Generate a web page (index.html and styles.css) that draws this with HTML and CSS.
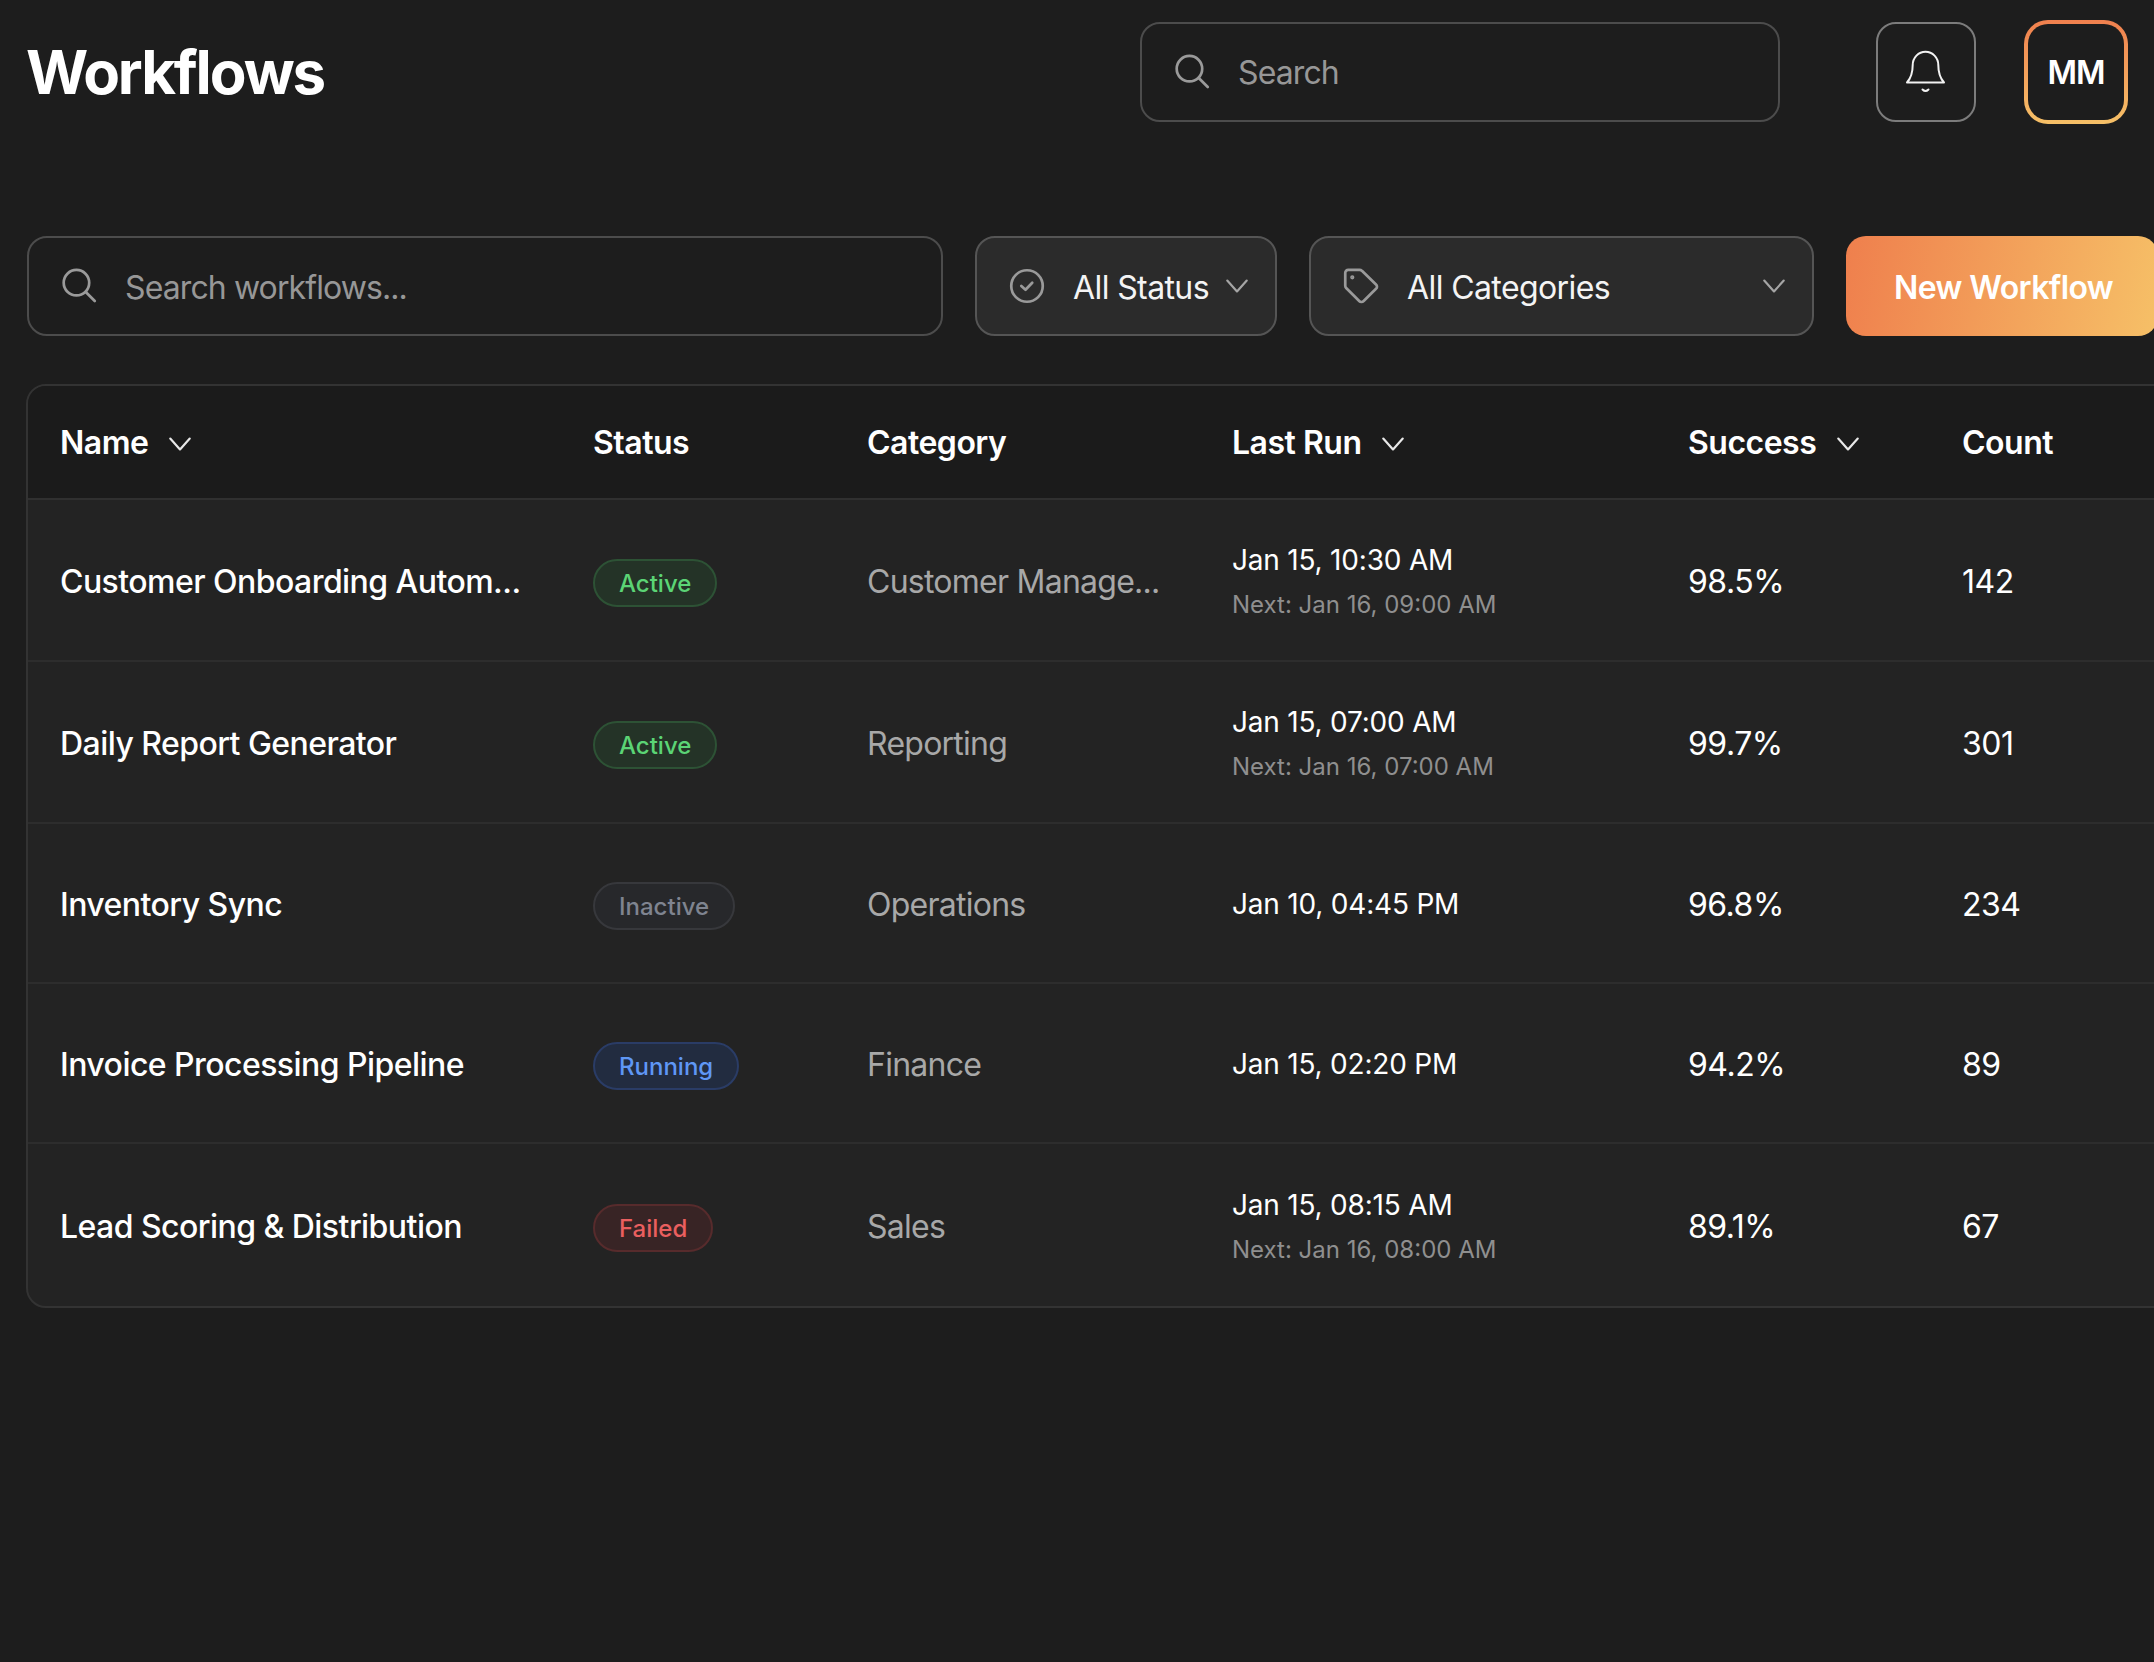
FILE: index.html
```html
<!DOCTYPE html>
<html>
	<head>
		<meta charset="UTF-8">
		<title>Workflows</title>
		<link rel="stylesheet" href="styles.css">
	</head>
	<body>
		<div class="page">
			<header class="topbar">
				<h1 class="title">Workflows</h1>
				<div class="field top-search">
					<svg class="icon" viewBox="0 0 24 24"><circle cx="10.300" cy="9.800" r="8.500"/><path d="M16.500 16l6 6"/></svg>
					<span class="placeholder">Search</span>
				</div>
				<div class="bell">
					<svg viewBox="0 0 44 44"><path d="M3 32.500H40C36 28 34.300 23 34.300 15A12.800 13.300 0 0 0 8.700 15C8.700 23 7 28 3 32.500Z"/><path d="M18.500 39.500Q21.500 42.500 24.500 39.500"/></svg>
				</div>
				<div class="avatar"><span class="avatar-in">MM</span></div>
			</header>

			<div class="toolbar">
				<div class="field wf-search">
					<svg class="icon" viewBox="0 0 24 24"><circle cx="10.300" cy="9.800" r="8.500"/><path d="M16.500 16l6 6"/></svg>
					<span class="placeholder">Search workflows...</span>
				</div>
				<div class="select status-select">
					<svg class="icon" viewBox="0 0 24 24"><circle cx="12" cy="12" r="10.500"/><path d="M8.200 12l2.800 2.500 4.500-4.700"/></svg>
					<span class="select-label">All Status</span>
					<svg class="chev" viewBox="0 0 24 24"><path d="M3 7l9 10 9-10"/></svg>
				</div>
				<div class="select cat-select">
					<svg class="icon" viewBox="0 0 24 24"><path d="M1.500 3.300A2 2 0 0 1 3.500 1.300H11c.7 0 1.300.3 1.800.7L22 11c.9.9.9 2 0 2.800L13.800 22c-.9.900-2.200.900-3 0L2.100 13.300c-.4-.4-.6-1-.6-1.700Z"/><circle class="tag-dot" cx="6.200" cy="6.200" r=".5"/></svg>
					<span class="select-label">All Categories</span>
					<svg class="chev" viewBox="0 0 24 24"><path d="M3 7l9 10 9-10"/></svg>
				</div>
				<div class="new-btn">New Workflow</div>
			</div>

			<div class="table-wrap">
				<table class="wf-table">
					<colgroup>
						<col class="c-name"><col class="c-status"><col class="c-cat"><col class="c-run"><col class="c-succ"><col class="c-count">
					</colgroup>
					<thead>
						<tr>
							<th>Name<svg class="th-chev" viewBox="0 0 24 24"><path d="M3 7l9 10 9-10"/></svg></th>
							<th>Status</th>
							<th>Category</th>
							<th>Last Run<svg class="th-chev" viewBox="0 0 24 24"><path d="M3 7l9 10 9-10"/></svg></th>
							<th>Success<svg class="th-chev" viewBox="0 0 24 24"><path d="M3 7l9 10 9-10"/></svg></th>
							<th>Count</th>
						</tr>
					</thead>
					<tbody>
						<tr class="row-a">
							<td class="name">Customer Onboarding Autom...</td>
							<td><span class="badge active">Active</span></td>
							<td class="cat">Customer Manage...</td>
							<td><div class="run">Jan 15, 10:30 AM</div><div class="next">Next: Jan 16, 09:00 AM</div></td>
							<td class="num">98.5%</td>
							<td class="num">142</td>
						</tr>
						<tr class="row-a">
							<td class="name">Daily Report Generator</td>
							<td><span class="badge active">Active</span></td>
							<td class="cat">Reporting</td>
							<td><div class="run">Jan 15, 07:00 AM</div><div class="next">Next: Jan 16, 07:00 AM</div></td>
							<td class="num">99.7%</td>
							<td class="num">301</td>
						</tr>
						<tr class="row-b">
							<td class="name">Inventory Sync</td>
							<td><span class="badge inactive">Inactive</span></td>
							<td class="cat">Operations</td>
							<td><div class="run">Jan 10, 04:45 PM</div></td>
							<td class="num">96.8%</td>
							<td class="num">234</td>
						</tr>
						<tr class="row-b">
							<td class="name">Invoice Processing Pipeline</td>
							<td><span class="badge running">Running</span></td>
							<td class="cat">Finance</td>
							<td><div class="run">Jan 15, 02:20 PM</div></td>
							<td class="num">94.2%</td>
							<td class="num">89</td>
						</tr>
						<tr class="row-last">
							<td class="name">Lead Scoring &amp; Distribution</td>
							<td><span class="badge failed">Failed</span></td>
							<td class="cat">Sales</td>
							<td><div class="run">Jan 15, 08:15 AM</div><div class="next">Next: Jan 16, 08:00 AM</div></td>
							<td class="num">89.1%</td>
							<td class="num">67</td>
						</tr>
					</tbody>
				</table>
			</div>
		</div>
	</body>
</html>
```

FILE: styles.css
```css
*{
	margin: 0;
	padding: 0;
	box-sizing: border-box;
}
html,body{
	height: 100%;
	overflow: hidden;
	background-color: #1d1d1d;
}
body{
	font-family: Inter, "Liberation Sans", sans-serif;
	color: #fff;
}
.page{
	width: 2190px;
	padding: 22px 0 0 27px;
}

/* top bar */
.topbar{
	display: flex;
	align-items: center;
	width: 2101px;
	height: 100px;
}
.title{
	font-size: 60px;
	font-weight: 700;
	letter-spacing: -2.1px;
	margin-left: -1px;
	margin-right: auto;
}
.field{
	display: flex;
	align-items: center;
	height: 100px;
	border: 2px solid #4c4c4c;
	border-radius: 20px;
	padding-left: 32px;
}
.top-search{
	width: 640px;
	margin-right: 96px;
}
.icon{
	width: 36px;
	height: 36px;
	flex: none;
	fill: none;
	stroke: #9a9a9a;
	stroke-width: 1.800;
	stroke-linecap: round;
	stroke-linejoin: round;
	margin-right: 28px;
}
.tag-dot{
	fill: #9a9a9a;
}
.placeholder{
	font-size: 32px;
	letter-spacing: -0.9px;
	color: #979797;
}
.toolbar .placeholder,
.select-label,
.new-btn{
	padding-top: 2px;
}
.bell{
	display: flex;
	align-items: center;
	justify-content: center;
	width: 100px;
	height: 100px;
	border: 2px solid #7c7c7c;
	border-radius: 20px;
	margin-right: 48px;
}
.bell svg{
	width: 44px;
	height: 44px;
	fill: none;
	stroke: #f2f2f2;
	stroke-width: 2;
	stroke-linecap: round;
	stroke-linejoin: round;
}
.avatar{
	width: 104px;
	height: 104px;
	padding: 4px;
	border-radius: 24px;
	background: linear-gradient(180deg, #f0804e, #f6c067);
}
.avatar-in{
	display: flex;
	align-items: center;
	justify-content: center;
	height: 100%;
	border-radius: 20px;
	background-color: #1d1d1d;
	font-size: 32px;
	font-weight: 600;
	letter-spacing: -1px;
}

/* filters */
.toolbar{
	display: flex;
	gap: 32px;
	height: 100px;
	margin-top: 114px;
}
.wf-search{
	width: 916px;
}
.select{
	display: flex;
	align-items: center;
	height: 100px;
	background-color: #2b2b2b;
	border: 2px solid #555;
	border-radius: 20px;
	padding: 0 25px 0 32px;
}
.status-select{
	width: 302px;
}
.cat-select{
	width: 505px;
}
.select-label{
	font-size: 32px;
	letter-spacing: -0.6px;
	color: #f4f4f4;
	margin-right: auto;
}
.chev{
	width: 26px;
	height: 26px;
	flex: none;
	fill: none;
	stroke: #a5a5a5;
	stroke-width: 2;
	stroke-linecap: round;
	stroke-linejoin: round;
}
.new-btn{
	display: flex;
	align-items: center;
	width: 312px;
	padding-left: 48px;
	border-radius: 20px;
	background: linear-gradient(100deg, #ef7f4d, #f6c067);
	font-size: 32px;
	font-weight: 600;
	letter-spacing: -0.6px;
}

/* table */
.table-wrap{
	width: 2160px;
	margin: 48px 0 0 -1px;
	background-color: #232323;
	border: 2px solid #333;
	border-radius: 20px;
	overflow: hidden;
}
.wf-table{
	width: 100%;
	table-layout: fixed;
	border-collapse: collapse;
}
.c-name{ width: 533px; }
.c-status{ width: 274px; }
.c-cat{ width: 365px; }
.c-run{ width: 456px; }
.c-succ{ width: 274px; }
th{
	height: 113px;
	padding: 1px 0 0 32px;
	background-color: #1b1b1b;
	text-align: left;
	font-size: 32px;
	font-weight: 600;
	letter-spacing: -0.5px;
	border-bottom: 2px solid #303030;
}
.th-chev{
	width: 26px;
	height: 26px;
	margin-left: 19px;
	vertical-align: -3px;
	fill: none;
	stroke: #e8e8e8;
	stroke-width: 2;
	stroke-linecap: round;
	stroke-linejoin: round;
}
td{
	padding: 2px 0 0 32px;
	border-bottom: 2px solid #2d2d2d;
}
.row-last td{
	border-bottom: none;
}
.row-a{
	height: 162px;
}
.row-b{
	height: 160px;
}
.row-last{
	height: 163px;
}
.name{
	font-size: 32px;
	font-weight: 500;
	letter-spacing: -0.55px;
}
.cat{
	font-size: 32px;
	letter-spacing: -0.75px;
	color: #a8a8a8;
}
.num{
	font-size: 32px;
	letter-spacing: -0.5px;
}
.run{
	font-size: 28px;
	letter-spacing: -0.2px;
	line-height: 40px;
}
.next{
	font-size: 24px;
	color: #8f8f8f;
	line-height: 36px;
	margin-top: 7px;
}
.badge{
	display: inline-block;
	height: 48px;
	line-height: 46px;
	padding: 0 24px;
	font-size: 24px;
	font-weight: 500;
	border: 2px solid;
	border-radius: 24px;
	position: relative;
	top: 2px;
}
.active{
	color: #5bd475;
	background-color: #243327;
	border-color: #2d5235;
}
.inactive{
	color: #7f8490;
	background-color: #27282b;
	border-color: #37383c;
}
.running{
	color: #5f97f5;
	background-color: #222c40;
	border-color: #2a3c66;
}
.failed{
	color: #ea5f5f;
	background-color: #382425;
	border-color: #572b2c;
}
```
